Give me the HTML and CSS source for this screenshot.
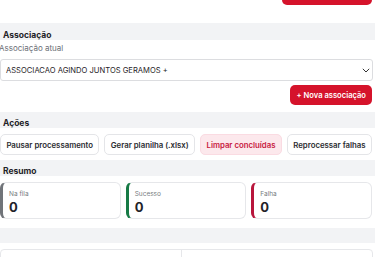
FILE: index.html
```html
<!DOCTYPE html>
<html>

<head>
    <meta charset="utf-8">
    <title>Processamento</title>
    <meta name="viewport" content="width=device-width, initial-scale=1">
    <link rel="stylesheet" href="styles.css">
</head>

<body>
    <div class="top">
        <button class="btn-red top-btn"></button>
    </div>

    <div class="section-title first">Associação</div>
    <label class="field-label" for="assoc">Associação atual</label>
    <div class="select-box">
        <span>ASSOCIACAO AGINDO JUNTOS GERAMOS +</span>
        <svg width="8" height="5" viewBox="0 0 8 5"><path d="M0.8 0.8 L4 4 L7.2 0.8" fill="none" stroke="#333" stroke-width="1" /></svg>
    </div>
    <div class="right-row">
        <button class="btn-red">+ Nova associação</button>
    </div>

    <div class="section-title">Ações</div>
    <div class="actions">
        <button class="btn">Pausar processamento</button>
        <button class="btn">Gerar planilha (.xlsx)</button>
        <button class="btn btn-pink">Limpar concluídas</button>
        <button class="btn">Reprocessar falhas</button>
    </div>

    <div class="section-title">Resumo</div>
    <div class="cards">
        <div class="card card-gray">
            <div class="card-label">Na fila</div>
            <div class="card-value">0</div>
        </div>
        <div class="card card-green">
            <div class="card-label">Sucesso</div>
            <div class="card-value">0</div>
        </div>
        <div class="card card-red">
            <div class="card-label">Falha</div>
            <div class="card-value">0</div>
        </div>
    </div>

    <div class="section-title last"></div>
    <div class="table-box">
        <div class="cell"></div>
        <div class="cell"></div>
    </div>
</body>

</html>
```

FILE: styles.css
```css
body {
    margin: 0;
    height: 257px;
    font-family: Inter, "Liberation Sans", sans-serif;
    color: #1f2328;
    background-color: #ffffff;
    overflow: hidden;
}

.top {
    height: 5px;
    display: flex;
    justify-content: flex-end;
    align-items: flex-end;
    overflow: hidden;
    padding-right: 3px;
}

.top-btn {
    width: 90px;
    height: 22px;
}

.btn-red {
    background-color: #d5132b;
    color: #ffffff;
    border: none;
    border-radius: 5px;
    font-family: inherit;
    font-size: 7.6px;
    font-weight: 600;
    padding: 0 6px;
    height: 20px;
}

.section-title {
    box-sizing: border-box;
    background-color: #f2f3f5;
    font-size: 8.5px;
    font-weight: 700;
    line-height: 10px;
    padding: 6px 3px 0;
    height: 16px;
    margin-top: 7px;
}

.section-title.first {
    margin-top: 18px;
    height: 17px;
    padding-top: 7px;
}

.field-label {
    display: block;
    font-size: 8px;
    line-height: 10px;
    color: #6b6f76;
    margin: 3px 0 0 -1px;
    height: 16px;
}

.select-box {
    display: flex;
    justify-content: space-between;
    align-items: center;
    height: 20px;
    margin-right: 2px;
    border: 1px solid #dcdde0;
    border-radius: 3px;
    padding: 0 2px 0 5px;
    font-size: 7.6px;
}

.right-row {
    display: flex;
    justify-content: flex-end;
    padding: 4px 3px 0 0;
}

.actions {
    display: flex;
    gap: 5px;
    padding: 6px 3px 0 0;
}

.btn {
    flex: 1 1 auto;
    height: 21px;
    background-color: #ffffff;
    border: 1px solid #e4e5e8;
    border-radius: 5px;
    font-family: inherit;
    font-size: 7.8px;
    font-weight: 600;
    color: #2b2d31;
    padding: 0 5px;
    white-space: nowrap;
}

.btn-pink {
    background-color: #fce8ec;
    border-color: #fadbe2;
    color: #c8193f;
}

.actions + .section-title {
    margin-top: 5px;
}

.cards {
    display: flex;
    gap: 5px;
    padding: 6px 3px 0 0;
}

.card {
    flex: 1;
    height: 35px;
    border: 1px solid #e6e7ea;
    border-left: 3px solid;
    border-radius: 6px;
    padding: 0 0 0 6px;
}

.card-gray {
    border-left-color: #707479;
}

.card-green {
    border-left-color: #177a45;
}

.card-red {
    border-left-color: #b8163c;
}

.card-label {
    font-size: 6.5px;
    color: #777b80;
    margin-top: 7px;
}

.card-value {
    font-size: 13px;
    font-weight: 700;
    margin-top: 1px;
}

.section-title.last {
    margin-top: 9px;
    height: 15px;
}

.table-box {
    display: flex;
    margin-top: 6px;
    margin-right: 2px;
    height: 20px;
    border: 1px solid #e6e7ea;
    border-radius: 4px;
}

.cell {
    width: 180px;
    border-right: 1px solid #e6e7ea;
}

.cell:last-child {
    flex: 1;
    border-right: none;
}
```
